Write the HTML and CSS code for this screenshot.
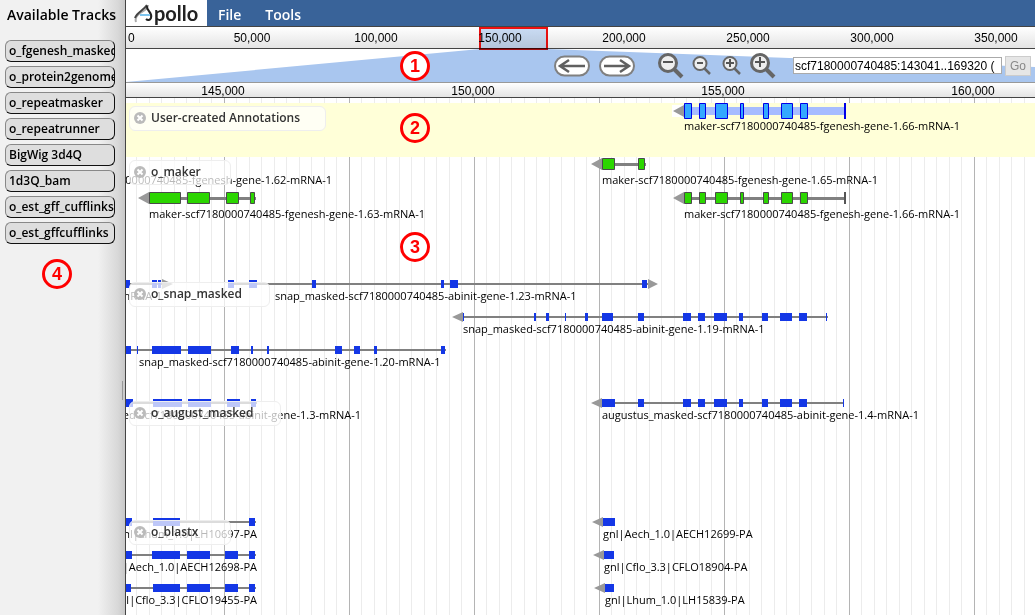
FILE: index.html
```html
<!DOCTYPE html>
<html lang="en">
<head>
<meta charset="utf-8">
<title>Apollo</title>
<link rel="stylesheet" href="styles.css">
</head>
<body>
<div class="app">
  <aside class="sidebar">
    <h2 class="sidebar-title">Available Tracks</h2>
    <div class="track-list">
      <button class="track-item">o_fgenesh_masked</button>
      <button class="track-item">o_protein2genome</button>
      <button class="track-item">o_repeatmasker</button>
      <button class="track-item">o_repeatrunner</button>
      <button class="track-item">BigWig 3d4Q</button>
      <button class="track-item">1d3Q_bam</button>
      <button class="track-item">o_est_gff_cufflinks</button>
      <button class="track-item">o_est_gffcufflinks</button>
    </div>
    <span class="splitter"></span>
  </aside>
  <main class="browser">
    <nav class="menubar">
      <div class="logo">
        <svg width="20" height="22" viewBox="0 0 20 22" aria-hidden="true">
          <path d="M2 20C0 14 6 11 11 8C13 6 14 5 14 3" fill="none" stroke="#aaa" stroke-width="2"/>
          <path d="M1 16C3 10 9 9 13 3" fill="none" stroke="#444" stroke-width="2"/>
          <path d="M13 4C12 9 19 10 17 16C16 18 14 19 12 17" fill="none" stroke="#222" stroke-width="2"/>
          <path d="M6 13h10" stroke="#7dc4ee" stroke-width="2"/>
        </svg><span class="logo-text">pollo</span>
      </div>
      <button class="menu">File</button>
      <button class="menu">Tools</button>
    </nav>
    <div class="overview-ruler">
      <span class="origin">0</span><span>50,000</span><span>100,000</span><span>150,000</span><span>200,000</span><span>250,000</span><span>300,000</span><span>350,000</span>
      <i class="locator"></i>
    </div>
    <div class="navbar">
      <svg class="wedge" viewBox="0 0 909 33" preserveAspectRatio="none" aria-hidden="true"><path d="M0 33L354 0H422L909 18V33Z" fill="#a9c6ef"/></svg>
      <div class="pan">
        <button class="icon" aria-label="Pan left"><svg width="36" height="22" viewBox="0 0 36 22"><rect x="1" y="1.500" width="34" height="19" rx="9.500" fill="#fff" stroke="#808080" stroke-width="2"/><path d="M31 11H6M15 5L6 11L15 17" fill="none" stroke="#606060" stroke-width="2.500"/></svg></button>
        <button class="icon" aria-label="Pan right"><svg width="36" height="22" viewBox="0 0 36 22"><rect x="1" y="1.500" width="34" height="19" rx="9.500" fill="#fff" stroke="#808080" stroke-width="2"/><path d="M5 11H30M21 5L30 11L21 17" fill="none" stroke="#606060" stroke-width="2.500"/></svg></button>
      </div>
      <div class="zoom">
        <button class="icon" aria-label="Zoom out far"><svg width="27" height="26" viewBox="0 0 27 26"><path d="M17 16L25 24" stroke="#666" stroke-width="4"/><circle cx="11" cy="10" r="8.500" fill="#eee" stroke="#666" stroke-width="3"/><path d="M6 9H16" stroke="#555" stroke-width="2"/></svg></button>
        <button class="icon" aria-label="Zoom out"><svg width="19" height="19" viewBox="0 0 19 19"><path d="M12 12L18 18" stroke="#666" stroke-width="2.500"/><circle cx="8" cy="7.500" r="6.500" fill="#eee" stroke="#666" stroke-width="2"/><path d="M5 7H11" stroke="#555" stroke-width="2"/></svg></button>
        <button class="icon zoom-in" aria-label="Zoom in"><svg width="19" height="19" viewBox="0 0 19 19"><path d="M12 12L18 18" stroke="#666" stroke-width="2.500"/><circle cx="8" cy="7.500" r="6.500" fill="#eee" stroke="#666" stroke-width="2"/><path d="M4 7H12M8 3V11" stroke="#555" stroke-width="2"/></svg></button>
        <button class="icon" aria-label="Zoom in close"><svg width="27" height="26" viewBox="0 0 27 26"><path d="M17 16L25 24" stroke="#666" stroke-width="4"/><circle cx="11" cy="10" r="8.500" fill="#eee" stroke="#666" stroke-width="3"/><path d="M6 9H16M11 4V14" stroke="#555" stroke-width="2"/></svg></button>
      </div>
      <input class="location" type="text" aria-label="Location" value="scf7180000740485:143041..169320 (26.28 Kb)">
      <button class="go" disabled>Go</button>
    </div>
    <div class="detail-ruler"><span>145,000</span><span>150,000</span><span>155,000</span><span>160,000</span></div>
    <div class="tracks">
      <svg class="gridlines" aria-hidden="true">
        <defs><pattern id="grid" x="-27" width="125" height="20" patternUnits="userSpaceOnUse"><path fill="#ececec" d="M12 0h1v20h-1zM25 0h1v20h-1zM37 0h1v20h-1zM50 0h1v20h-1zM62 0h1v20h-1zM75 0h1v20h-1zM87 0h1v20h-1zM100 0h1v20h-1zM112 0h1v20h-1z"/><path fill="#b4b4b4" d="M0 0h1v20h-1z"/></pattern></defs>
        <rect width="100%" height="100%" fill="url(#grid)"/>
      </svg>

      <section class="track user">
        <svg class="features"><g transform="translate(-126 0)">
          <path class="gap" d="M672 2h12v12h-12z"/><path class="arrow" d="M673 8l11-6v12z"/>
          <path fill="#a6bcff" d="M684 4h161v8h-161z"/>
          <path class="edit" d="M684.500.500h7v15h-7zM699.500.500h6v15h-6zM715.500.500h12v15h-12zM740.500.500h3v15h-3zM763.500.500h5v15h-5zM781.500.500h11v15h-11zM800.500.500h7v15h-7z"/>
          <path fill="#0000e8" d="M844 0h2v16h-2z"/>
          <text x="684" y="27">maker-scf7180000740485-fgenesh-gene-1.66-mRNA-1</text>
        </g></svg>
        <div class="label label-wide"><button class="close" aria-label="Close"><svg width="12" height="12" viewBox="0 0 12 12"><circle cx="6" cy="6" r="6"/><path d="M3.500 3.500L8.500 8.500M8.500 3.500L3.500 8.500"/></svg></button>User-created Annotations</div>
      </section>

      <section class="track maker">
        <svg class="features"><g transform="translate(-126 0)">
          <path class="line" d="M602 6h44v3h-44zM149 40h107v3h-107zM684 40h161v3h-161z"/>
          <path class="arrow" d="M591 7l11-6v12zM138 41l11-6v12zM673 41l11-6v12z"/>
          <path class="exon" d="M602.500 1.500h12v11h-12zM638.500 1.500h6v11h-6zM149.500 35.500h31v11h-31zM187.500 35.500h22v11h-22zM226.500 35.500h12v11h-12zM250.500 35.500h4v11h-4zM684.500 35.500h7v11h-7zM699.500 35.500h6v11h-6zM715.500 35.500h12v11h-12zM740.500 35.500h3v11h-3zM763.500 35.500h5v11h-5zM781.500 35.500h11v11h-11zM800.500 35.500h7v11h-7z"/>
          <path fill="#555" d="M844 35h2v12h-2z"/>
          <text class="end" x="332" y="27">maker-scf7180000740485-fgenesh-gene-1.62-mRNA-1</text>
          <text x="602" y="27">maker-scf7180000740485-fgenesh-gene-1.65-mRNA-1</text>
          <text x="149" y="61">maker-scf7180000740485-fgenesh-gene-1.63-mRNA-1</text>
          <text x="684" y="61">maker-scf7180000740485-fgenesh-gene-1.66-mRNA-1</text>
        </g></svg>
        <div class="label label-short"><button class="close" aria-label="Close"><svg width="12" height="12" viewBox="0 0 12 12"><circle cx="6" cy="6" r="6"/><path d="M3.500 3.500L8.500 8.500M8.500 3.500L3.500 8.500"/></svg></button>o_maker</div>
      </section>

      <section class="track snap">
        <svg class="features"><g transform="translate(-126 0)">
          <path class="line" d="M126 4h36v2h-36zM228 4h420v2h-420zM463 37h365v2h-365zM126 70h320v2h-320z"/>
          <path class="arrow" d="M173 5l-11-5v10zM658 5l-10-5v10zM452 38l11-5v10z"/>
          <path class="match" d="M126 1h4v8h-4zM152 1h5v8h-5zM158 1h3v8h-3zM228 1h6v8h-6zM249 1h8v8h-8zM312 1h4v8h-4zM441 1h3v8h-3zM450 1h8v8h-8zM642 1h5v8h-5z
            M463 34h1v8h-1zM534 34h2v8h-2zM546 34h3v8h-3zM565 34h1v8h-1zM585 34h3v8h-3zM602 34h11v8h-11zM638 34h6v8h-6zM683 34h8v8h-8zM698 34h7v8h-7zM714 34h13v8h-13zM739 34h4v8h-4zM762 34h6v8h-6zM780 34h12v8h-12zM799 34h8v8h-8zM826 34h1v8h-1z
            M126 67h5v8h-5zM137 67h1v8h-1zM152 67h29v8h-29zM188 67h23v8h-23zM231 67h8v8h-8zM251 67h2v8h-2zM267 67h2v8h-2zM335 67h7v8h-7zM354 67h6v8h-6zM374 67h3v8h-3zM441 67h4v8h-4z"/>
          <text class="end" x="162" y="21">snap_masked-scf7180000740485-abinit-gene-1.22-mRNA-1</text>
          <text x="275" y="21">snap_masked-scf7180000740485-abinit-gene-1.23-mRNA-1</text>
          <text x="463" y="54">snap_masked-scf7180000740485-abinit-gene-1.19-mRNA-1</text>
          <text x="139" y="87">snap_masked-scf7180000740485-abinit-gene-1.20-mRNA-1</text>
        </g></svg>
        <div class="label label-medium"><button class="close" aria-label="Close"><svg width="12" height="12" viewBox="0 0 12 12"><circle cx="6" cy="6" r="6"/><path d="M3.500 3.500L8.500 8.500M8.500 3.500L3.500 8.500"/></svg></button>o_snap_masked</div>
      </section>

      <section class="track august">
        <svg class="features"><g transform="translate(-126 0)">
          <path class="line" d="M126 4h131v2h-131zM602 4h242v2h-242z"/>
          <path class="arrow" d="M591 5l11-5v10z"/>
          <path class="match" d="M126 1h7v8h-7zM153 1h29v8h-29zM188 1h23v8h-23zM227 1h13v8h-13zM251 1h5v8h-5zM602 1h13v8h-13zM638 1h6v8h-6zM683 1h8v8h-8zM698 1h7v8h-7zM714 1h13v8h-13zM739 1h4v8h-4zM762 1h6v8h-6zM780 1h12v8h-12zM799 1h8v8h-8zM843 1h1v8h-1z"/>
          <text class="end" x="361" y="21">augustus_masked-scf7180000740485-abinit-gene-1.3-mRNA-1</text>
          <text x="602" y="21">augustus_masked-scf7180000740485-abinit-gene-1.4-mRNA-1</text>
        </g></svg>
        <div class="label label-long"><button class="close" aria-label="Close"><svg width="12" height="12" viewBox="0 0 12 12"><circle cx="6" cy="6" r="6"/><path d="M3.500 3.500L8.500 8.500M8.500 3.500L3.500 8.500"/></svg></button>o_august_masked</div>
      </section>

      <section class="track blastx">
        <svg class="features"><g transform="translate(-126 0)">
          <path class="line" d="M126 4h130v2h-130zM126 37h130v2h-130zM126 70h130v2h-130z"/>
          <path class="arrow" d="M592 5l11-5v10zM593 38l11-5v10zM594 71l11-5v10z"/>
          <path class="match" d="M126 1h6v8h-6zM153 1h27v8h-27zM249 1h6v8h-6zM603 1h12v8h-12z
            M126 34h6v8h-6zM152 34h28v8h-28zM187 34h23v8h-23zM225 34h13v8h-13zM249 34h6v8h-6zM604 34h10v8h-10z
            M126 67h5v8h-5zM153 67h27v8h-27zM187 67h23v8h-23zM225 67h13v8h-13zM249 67h6v8h-6zM605 67h9v8h-9z"/>
          <text class="end" x="257" y="21">gnl|Lhum_1.0|LH10697-PA</text>
          <text class="end" x="257" y="54">gnl|Aech_1.0|AECH12698-PA</text>
          <text class="end" x="257" y="87">gnl|Cflo_3.3|CFLO19455-PA</text>
          <text x="603" y="21">gnl|Aech_1.0|AECH12699-PA</text>
          <text x="604" y="54">gnl|Cflo_3.3|CFLO18904-PA</text>
          <text x="605" y="87">gnl|Lhum_1.0|LH15839-PA</text>
        </g></svg>
        <div class="label label-short"><button class="close" aria-label="Close"><svg width="12" height="12" viewBox="0 0 12 12"><circle cx="6" cy="6" r="6"/><path d="M3.500 3.500L8.500 8.500M8.500 3.500L3.500 8.500"/></svg></button>o_blastx</div>
      </section>
    </div>
  </main>
  <b class="callout callout-1">1</b>
  <b class="callout callout-2">2</b>
  <b class="callout callout-3">3</b>
  <b class="callout callout-4">4</b>
</div>
</body>
</html>
```

FILE: styles.css
```css
* { box-sizing: border-box; }
body { margin: 0; background: #fff; color: #000; font-family: "Open Sans", "Noto Sans", sans-serif; font-size: 12px; }
button { margin: 0; font-family: inherit; color: inherit; }
.app { position: relative; display: flex; height: 100vh; overflow: hidden; }

.sidebar { position: relative; flex: 0 0 126px; min-width: 0; border-right: 1px solid #444; background: linear-gradient(90deg, #f1f1f1 98px, #d8d8d8 118px, #c8c8c8); }
.sidebar-title { margin: 0; padding: 5px 0 0 7px; height: 40px; font-size: 14px; line-height: 20px; font-weight: 600; white-space: nowrap; }
.track-list { display: flex; flex-direction: column; gap: 4px; padding: 0 10px 0 5px; }
.track-item { height: 22px; padding: 0 0 0 3px; border: 1px solid #888; border-right-color: #111; border-bottom-color: #111; border-radius: 6px; background: #dedede; font-size: 12px; line-height: 18px; font-weight: 600; text-align: left; white-space: nowrap; overflow: hidden; }
.splitter { position: absolute; right: 2px; top: 381px; width: 1px; height: 19px; background: #999; }

.browser { flex: 1; min-width: 0; display: flex; flex-direction: column; overflow: hidden; }
.menubar { display: flex; height: 27px; background: #396399; border-bottom: 1px solid #444; }
.logo { display: flex; align-items: center; width: 81px; padding-left: 8px; background: #fff; }
.logo-text { font: 700 20px/24px Lato, sans-serif; color: #222; }
.menu { padding: 3px 10px 0 11px; border: 0; background: none; color: #fff; font-size: 14px; line-height: 20px; font-weight: 600; }
.menu + .menu { padding-left: 14px; }

.overview-ruler, .detail-ruler { display: flex; font: 12px/22px "Liberation Sans", Arial, sans-serif; background: linear-gradient(#fff, #e4e4e4); text-align: center; white-space: nowrap; }
.overview-ruler { position: relative; height: 22px; border-bottom: 1px solid #444; }
.overview-ruler span { flex: 0 0 124px; }
.overview-ruler .origin { flex-basis: 64px; padding-left: 2px; text-align: left; }
.locator { position: absolute; left: 353px; top: 0; width: 69px; height: 23px; border: 2px solid #f01010; background: #a9c6ef99; mix-blend-mode: multiply; z-index: 1; }
.navbar { position: relative; display: flex; align-items: center; justify-content: flex-end; height: 34px; padding-right: 4px; border-bottom: 1px solid #999; }
.wedge { position: absolute; inset: 0; width: 100%; height: 100%; }
.icon { position: relative; padding: 0; border: 0; background: none; display: block; }
.icon svg { display: block; }
.pan { display: flex; gap: 9px; margin-right: 22px; }
.zoom { display: flex; gap: 8px; align-items: center; margin-right: 17px; }
.zoom-in { margin-left: 3px; }
.location { position: relative; width: 209px; height: 17px; padding: 0 6px 0 1px; border: 1px solid #aaa; background: #fff; font: 12px "Liberation Sans", Arial, sans-serif; }
.go { position: relative; width: 26px; height: 20px; margin-left: 3px; padding: 0; border: 1px solid #ccc; background: #e6e6e6; color: #888; font: 12px "Liberation Sans", Arial, sans-serif; }
.detail-ruler { height: 15px; border-bottom: 1px solid #444; line-height: 16px; }
.detail-ruler span { flex: 0 0 250px; }
.detail-ruler span:first-child { margin-left: -28px; }

.tracks { position: relative; flex: 1; padding-top: 5px; overflow: hidden; }
.gridlines { position: absolute; inset: 0; width: 100%; height: 100%; }
.track { position: relative; }
.features { display: block; width: 100%; height: 100%; font-size: 11px; }
.features .end { text-anchor: end; }
.user { height: 54px; background: #ffffd8; }
.maker { height: 122px; }
.snap, .august, .blastx { height: 119px; }
.gap { fill: #fff; }
.arrow { fill: #999; }
.line { fill: #808080; }
.exon { fill: #2bd600; stroke: #4a4a4a; }
.edit { fill: #33a8ff; stroke: #0000e8; }
.match { fill: #1437e6; }

.label { position: absolute; left: 3px; top: 3px; display: flex; align-items: center; gap: 5px; height: 25px; padding: 0 4px 2px; border: 1px solid #eee; border-radius: 6px; background: #ffffffb8; color: #333; font-weight: 600; white-space: nowrap; }
.label-wide { width: 197px; }
.label-short { width: 102px; }
.label-medium { width: 141px; }
.label-long { width: 152px; }
.close { padding: 0; border: 0; background: none; line-height: 0; }
.close circle { fill: #bbb; }
.close path { stroke: #fff; stroke-width: 2; }

.callout { position: absolute; width: 30px; height: 30px; border: 3px solid #f00; border-radius: 50%; background: #fff; color: #f00; font: 700 18px/24px "Liberation Sans", Arial, sans-serif; text-align: center; z-index: 2; }
.callout-1 { left: 400px; top: 51px; }
.callout-2 { left: 400px; top: 113px; }
.callout-3 { left: 400px; top: 232px; }
.callout-4 { left: 42px; top: 259px; }
.callout-2 { background: #ffffd8; }
.callout-4 { background: #f1f1f1; }
```
